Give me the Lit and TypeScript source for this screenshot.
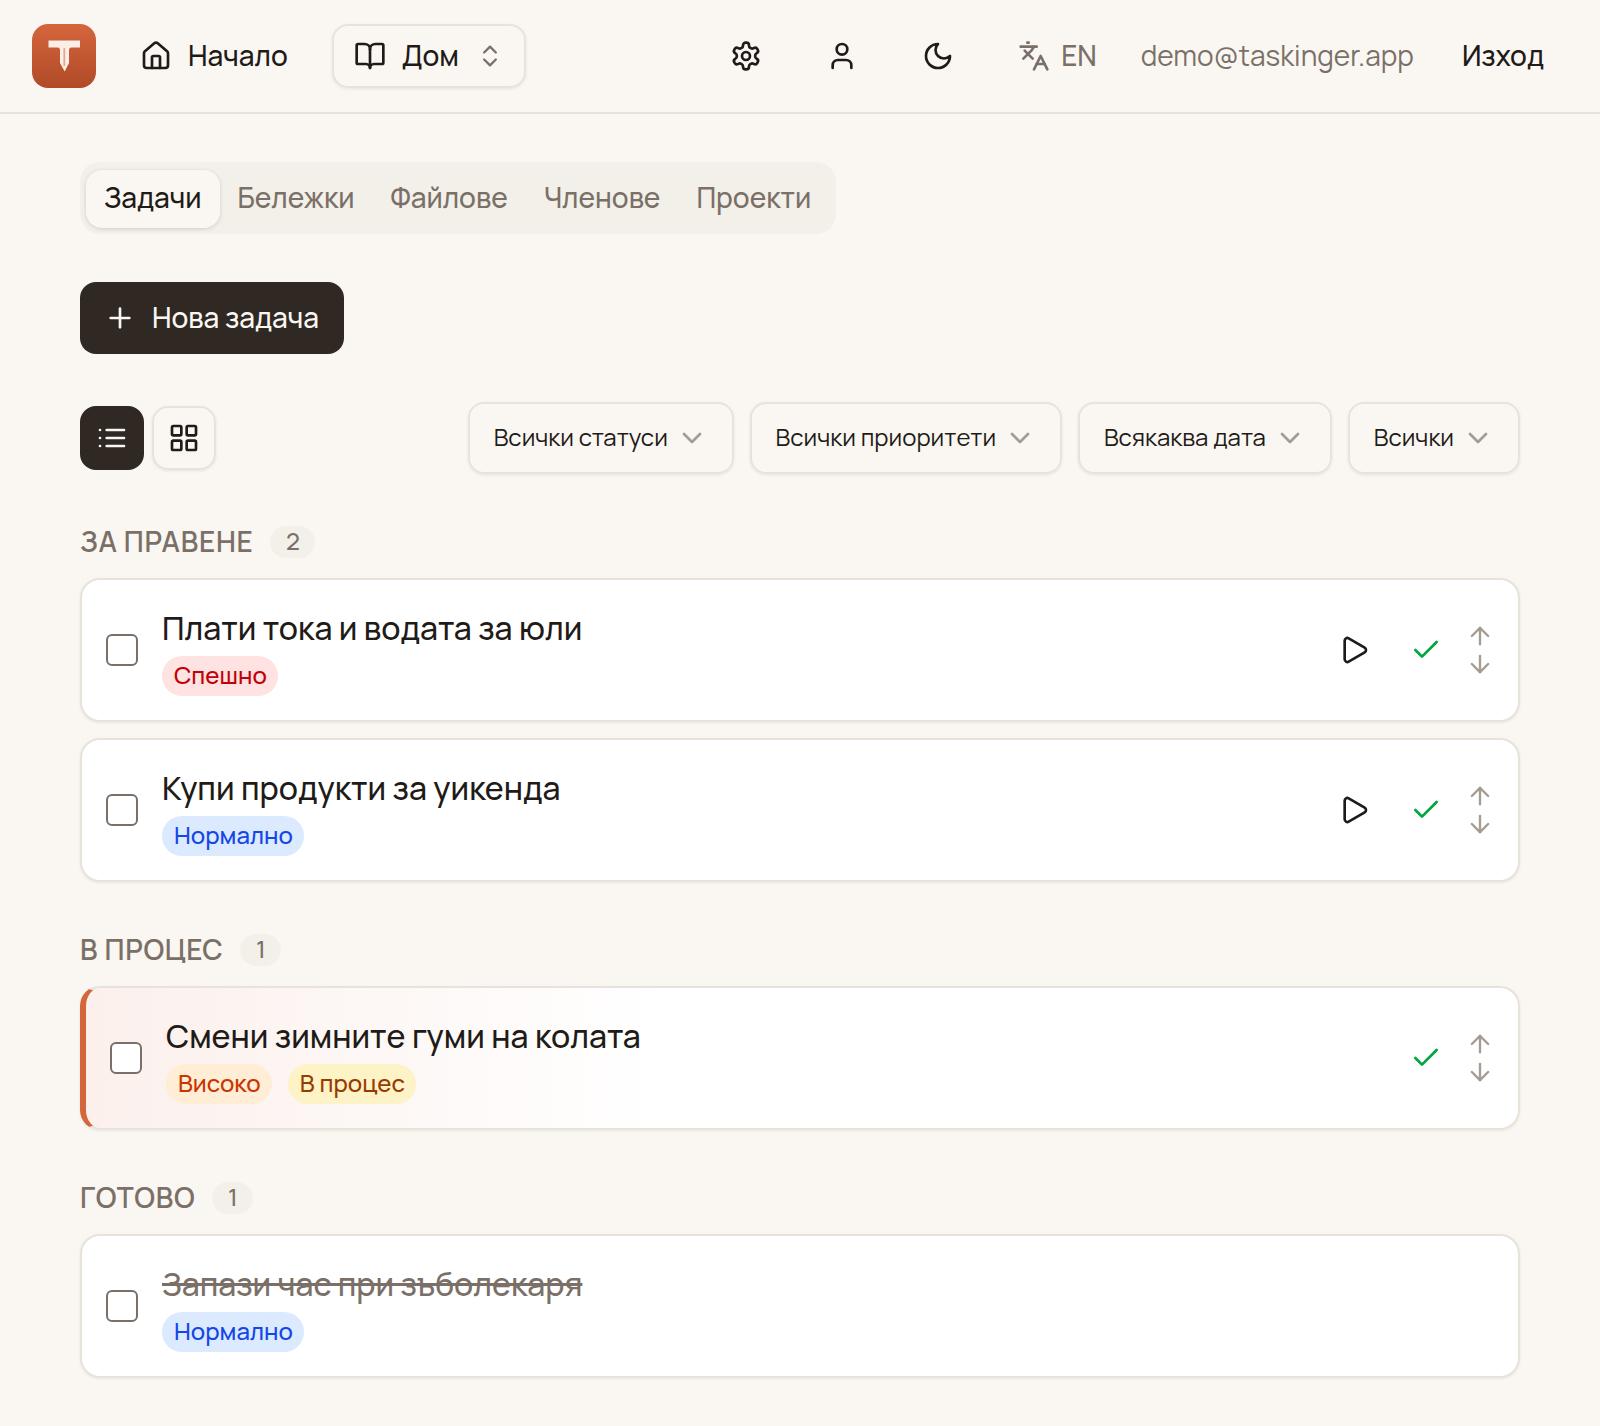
import { LitElement, html, css, svg } from "lit";
import { customElement } from "lit/decorators.js";

const ic = (size: number, body: unknown, sw = 2) => html`<svg class="ic" width=${size} height=${size} viewBox="0 0 24 24" fill="none" stroke="currentColor" stroke-width=${sw} stroke-linecap="round" stroke-linejoin="round">${body}</svg>`;

const I = {
  home: svg`<path d="M15 21v-8a1 1 0 0 0-1-1h-4a1 1 0 0 0-1 1v8"/><path d="M3 10a2 2 0 0 1 .709-1.528l7-6a2 2 0 0 1 2.582 0l7 6A2 2 0 0 1 21 10v9a2 2 0 0 1-2 2H5a2 2 0 0 1-2-2z"/>`,
  book: svg`<path d="M12 7v14"/><path d="M3 18a1 1 0 0 1-1-1V4a1 1 0 0 1 1-1h5a4 4 0 0 1 4 4 4 4 0 0 1 4-4h5a1 1 0 0 1 1 1v13a1 1 0 0 1-1 1h-6a3 3 0 0 0-3 3 3 3 0 0 0-3-3z"/>`,
  updown: svg`<path d="m7 15 5 5 5-5"/><path d="m7 9 5-5 5 5"/>`,
  gear: svg`<path d="M12.22 2h-.44a2 2 0 0 0-2 2v.18a2 2 0 0 1-1 1.73l-.43.25a2 2 0 0 1-2 0l-.15-.08a2 2 0 0 0-2.73.73l-.22.38a2 2 0 0 0 .73 2.73l.15.1a2 2 0 0 1 1 1.72v.51a2 2 0 0 1-1 1.74l-.15.09a2 2 0 0 0-.73 2.73l.22.38a2 2 0 0 0 2.73.73l.15-.08a2 2 0 0 1 2 0l.43.25a2 2 0 0 1 1 1.73V20a2 2 0 0 0 2 2h.44a2 2 0 0 0 2-2v-.18a2 2 0 0 1 1-1.73l.43-.25a2 2 0 0 1 2 0l.15.08a2 2 0 0 0 2.73-.73l.22-.39a2 2 0 0 0-.73-2.73l-.15-.08a2 2 0 0 1-1-1.74v-.5a2 2 0 0 1 1-1.74l.15-.09a2 2 0 0 0 .73-2.73l-.22-.38a2 2 0 0 0-2.73-.73l-.15.08a2 2 0 0 1-2 0l-.43-.25a2 2 0 0 1-1-1.73V4a2 2 0 0 0-2-2z"/><circle cx="12" cy="12" r="3"/>`,
  user: svg`<path d="M19 21v-2a4 4 0 0 0-4-4H9a4 4 0 0 0-4 4v2"/><circle cx="12" cy="7" r="4"/>`,
  moon: svg`<path d="M12 3a6 6 0 0 0 9 9 9 9 0 1 1-9-9Z"/>`,
  lang: svg`<path d="m5 8 6 6"/><path d="m4 14 6-6 2-3"/><path d="M2 5h12"/><path d="M7 2h1"/><path d="m22 22-5-10-5 10"/><path d="M14 18h6"/>`,
  plus: svg`<path d="M5 12h14"/><path d="M12 5v14"/>`,
  list: svg`<path d="M3 12h.01"/><path d="M3 18h.01"/><path d="M3 6h.01"/><path d="M8 12h13"/><path d="M8 18h13"/><path d="M8 6h13"/>`,
  grid: svg`<rect x="3" y="3" width="7" height="7" rx="1"/><rect x="14" y="3" width="7" height="7" rx="1"/><rect x="14" y="14" width="7" height="7" rx="1"/><rect x="3" y="14" width="7" height="7" rx="1"/>`,
  chev: svg`<path d="m6 9 6 6 6-6"/>`,
  play: svg`<path d="M5 5a2 2 0 0 1 3.008-1.728l11.997 6.998a2 2 0 0 1 .003 3.458l-12 7A2 2 0 0 1 5 19z"/>`,
  check: svg`<path d="M20 6 9 17l-5-5"/>`,
  up: svg`<path d="m5 12 7-7 7 7"/><path d="M12 19V5"/>`,
  down: svg`<path d="M12 5v14"/><path d="m19 12-7 7-7-7"/>`,
};

type Task = { title: string; tags: [string, string][]; play?: boolean; actions?: boolean; done?: boolean; active?: boolean };
const groups: { name: string; tasks: Task[] }[] = [
  { name: "ЗА ПРАВЕНЕ", tasks: [
    { title: "Плати тока и водата за юли", tags: [["Спешно", "urgent"]], play: true, actions: true },
    { title: "Купи продукти за уикенда", tags: [["Нормално", "normal"]], play: true, actions: true },
  ] },
  { name: "В ПРОЦЕС", tasks: [
    { title: "Смени зимните гуми на колата", tags: [["Високо", "high"], ["В процес", "progress"]], actions: true, active: true },
  ] },
  { name: "ГОТОВО", tasks: [
    { title: "Запази час при зъболекаря", tags: [["Нормално", "normal"]], done: true },
  ] },
];

@customElement("app-root")
export class AppRoot extends LitElement {
  static styles = css`
    :host { display: block; min-height: 1426px; background: #faf7f2; color: #1f1b18; font-family: Manrope, Inter, "Noto Sans", sans-serif; font-size: 28px; font-weight: 500; line-height: 40px; }
    * { box-sizing: border-box; }
    .ic { display: block; flex: none; }
    .t { margin-bottom: 2px; }
    header { height: 114px; border-bottom: 2px solid #e8e3da; display: flex; align-items: center; padding: 0 56px 0 32px; }
    .logo { width: 64px; height: 64px; border-radius: 16px; background: linear-gradient(180deg, #d4663c, #b04a28); }
    .logo svg { display: block; }
    .nav { display: flex; align-items: center; gap: 16px; margin-left: 44px; }
    .ws { display: flex; align-items: center; gap: 16px; margin-left: 44px; height: 64px; width: 194px; padding: 0 20px; border: 2px solid #e8e3da; border-radius: 16px; box-shadow: 0 1px 3px rgba(60,45,30,.1); }
    .ws .sel { color: #7a7068; margin-left: auto; }
    .right { margin-left: auto; display: flex; align-items: center; }
    .right .b { width: 32px; display: flex; justify-content: center; margin-right: 64px; }
    .lang { display: flex; align-items: center; gap: 11px; color: #7a7068; margin-right: 44px; }
    .mail { color: #7a7068; margin-right: 48px; font-weight: 400; }
    main { padding: 48px 80px 0; }
    .tabs { display: inline-flex; padding: 8px 7px 6px 6px; height: 72px; background: #f3f0ea; border-radius: 20px; vertical-align: top; }
    .tab { display: flex; align-items: center; padding: 0 18px 4px; color: #7a7068; border-radius: 16px; }
    .tab.on { color: #1f1b18; background: #faf7f2; box-shadow: 0 1px 4px rgba(60,45,30,.18); }
    .new { display: flex; width: 264px; height: 72px; margin-top: 48px; align-items: center; gap: 16px; padding-left: 24px; background: #2f2823; color: #faf7f2; border-radius: 16px; }
    .bar { display: flex; align-items: center; margin-top: 48px; }
    .view { width: 64px; height: 64px; display: flex; align-items: center; justify-content: center; border-radius: 16px; margin-right: 8px; border: 2px solid #e8e3da; box-shadow: 0 1px 3px rgba(60,45,30,.1); }
    .view.on { background: #2f2823; border-color: #2f2823; color: #faf7f2; box-shadow: none; }
    .filters { margin-left: auto; display: flex; gap: 16px; font-size: 24px; font-weight: 400; }
    .filter { height: 72px; display: flex; align-items: center; gap: 8px; padding: 0 24px 0 23.800px; border: 2px solid #e8e3da; border-radius: 16px; box-shadow: 0 1px 3px rgba(60,45,30,.1); }
    .filter .ic { color: #a49b92; }
    .head { display: flex; align-items: center; gap: 17px; color: #7a7068; font-weight: 600; height: 40px; margin-bottom: 16px; letter-spacing: .025em; }
    .count { height: 32px; padding: 0 15.500px 2px; border-radius: 16px; background: #f3f0ea; font-size: 24px; font-weight: 500; display: flex; align-items: center; justify-content: center; letter-spacing: 0; }
    .list { display: flex; flex-direction: column; gap: 16px; }
    .card { height: 144px; background: #fff; border: 2px solid #e8e3da; border-radius: 20px; box-shadow: 0 1px 3px rgba(60,45,30,.08); display: flex; align-items: center; padding: 0 24px; }
    .card.active { border-left: 6px solid #d4663c; background: linear-gradient(90deg, #fbf0ec, #fff 40%); }
    .cb { width: 32px; height: 32px; flex: none; border: 2px solid #7a7068; border-radius: 6px; background: #fff; margin-right: 24px; }
    .title { font-size: 32px; line-height: 48px; }
    .card.done .title { text-decoration: line-through; color: #7a7068; }
    .tags { display: flex; gap: 15.500px; margin-top: 4px; }
    .tag { height: 40px; padding: 0 11.500px 2px 12px; border-radius: 20px; font-size: 24px; display: flex; align-items: center; }
    .urgent { background: #ffe2e2; color: #c10007; }
    .normal { background: #dbeafe; color: #1447e6; }
    .high { background: #ffedd5; color: #ca3500; }
    .progress { background: #fef3c6; color: #973c00; }
    .acts { margin-left: auto; display: flex; align-items: center; }
    .play { margin-right: 40px; }
    .chk { color: #00a63e; margin-right: 24px; }
    .arrows { display: flex; flex-direction: column; color: #a49b92; }
    .sec { margin-bottom: 48px; }
    .gap { height: 48px; }
  `;

  task(t: Task) {
    return html`<div class="card ${t.active ? "active" : ""} ${t.done ? "done" : ""}">
      <div class="cb"></div>
      <div>
        <div class="title">${t.title}</div>
        <div class="tags">${t.tags.map(([l, c]) => html`<span class="tag ${c}">${l}</span>`)}</div>
      </div>
      ${t.actions ? html`<div class="acts">
        ${t.play ? html`<span class="play">${ic(32, I.play)}</span>` : ""}
        <span class="chk">${ic(32, I.check)}</span>
        <span class="arrows">${ic(28, I.up)}${ic(28, I.down)}</span>
      </div>` : ""}
    </div>`;
  }

  render() {
    return html`
      <header>
        <div class="logo"><svg width="64" height="64" viewBox="0 0 64 64"><path d="M16.500 16.500h31.500v7h-9q-1.800 .3-2 2v13.500l-4.300 8.500-4.700-8.500v-13.500q-.2-1.700-2-2h-9.500z" fill="#fbeee6"/><path d="M32.300 24v18" stroke="#e2a88c" stroke-width="1.800"/></svg></div>
        <div class="nav">${ic(32, I.home)}<span class="t">Начало</span></div>
        <div class="ws">${ic(32, I.book)}<span class="t">Дом</span><span class="sel">${ic(28, I.updown)}</span></div>
        <div class="right">
          <span class="b">${ic(32, I.gear)}</span>
          <span class="b">${ic(32, I.user)}</span>
          <span class="b">${ic(32, I.moon)}</span>
          <span class="lang">${ic(32, I.lang)}<span class="t">EN</span></span>
          <span class="mail t">demo@taskinger.app</span>
          <span class="t">Изход</span>
        </div>
      </header>
      <main>
        <div class="tabs">
          <div class="tab on">Задачи</div><div class="tab">Бележки</div><div class="tab">Файлове</div><div class="tab">Членове</div><div class="tab">Проекти</div>
        </div>
        <div class="new">${ic(32, I.plus)}<span class="t">Нова задача</span></div>
        <div class="bar">
          <div class="view on">${ic(32, I.list)}</div>
          <div class="view">${ic(32, I.grid)}</div>
          <div class="filters">
            ${["Всички статуси", "Всички приоритети", "Всякаква дата", "Всички"].map((f) => html`<div class="filter"><span class="t">${f}</span>${ic(32, I.chev)}</div>`)}
          </div>
        </div>
        <div class="gap"></div>
        ${groups.map((g) => html`<section class="sec">
          <div class="head"><span class="t">${g.name}</span><span class="count">${g.tasks.length}</span></div>
          <div class="list">${g.tasks.map((t) => this.task(t))}</div>
        </section>`)}
      </main>
    `;
  }
}
